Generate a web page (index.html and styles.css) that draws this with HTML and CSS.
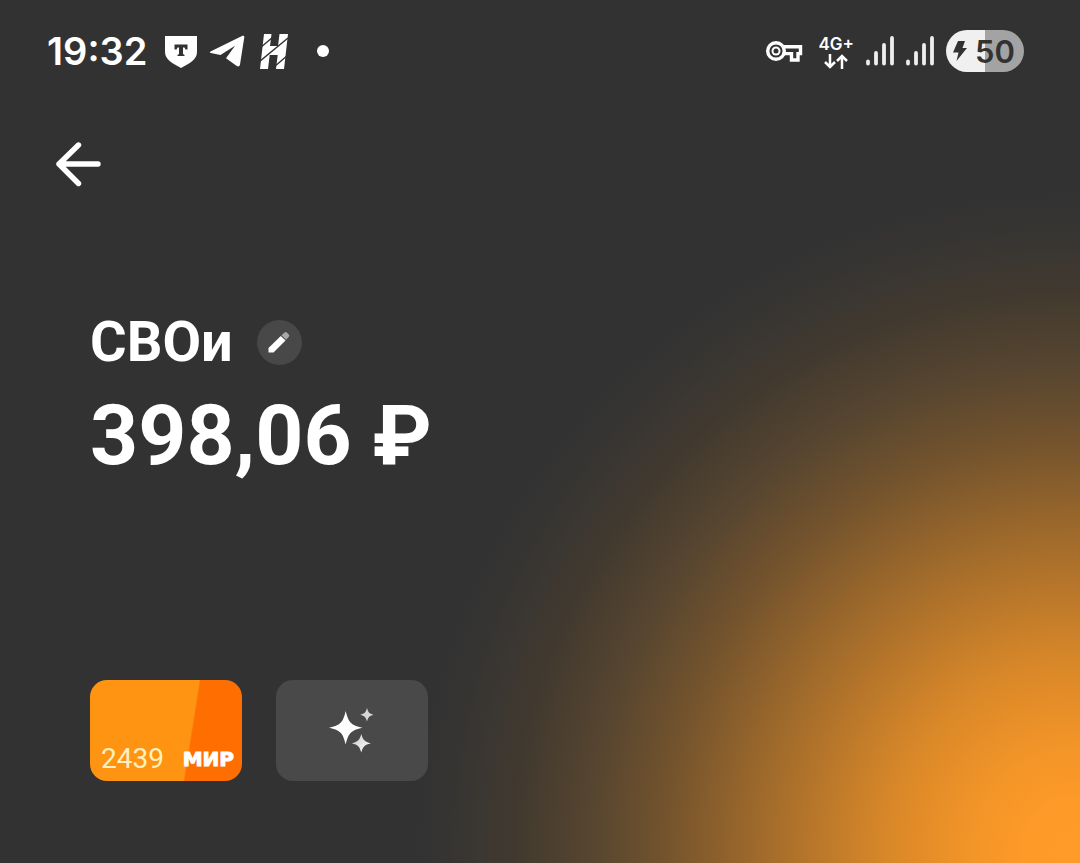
FILE: index.html
```html
<!DOCTYPE html>
<html lang="ru">
<head>
<meta charset="utf-8">
<meta name="viewport" content="width=device-width, initial-scale=1">
<title>СВОи</title>
<link rel="stylesheet" href="styles.css">
</head>
<body>
<header class="status">
  <div class="status-left">
    <time class="clock">19:32</time>
    <svg class="ico-bank" width="32" height="34" viewBox="0 0 32 34" aria-hidden="true">
      <path fill="#fff" d="M0 2h32v15c0 7-3 10-16 17C3 27 0 24 0 17z"/>
      <path fill="#323232" d="M9.500 10.500h13v5h-2l-1-2h-1.500v6.500l1.500 1v1h-7v-1l1.500-1v-6.500h-1.500l-1 2h-2z"/>
    </svg>
    <svg class="ico-plane" width="36" height="34" viewBox="0 0 36 34" aria-hidden="true">
      <path fill="#fff" d="M1.500 17.500 33.500 1.800c1-.4 2 .3 1.800 1.500L31 30.500c-.3 2-1.800 2.500-3.200 1.500L17 24.200l9-12.500L11.500 21 1.800 19c-1.200-.4-1.200-1-.3-1.500z"/>
    </svg>
    <svg class="ico-h" width="30" height="36" viewBox="0 0 30 36" aria-hidden="true">
      <path fill="#fff" d="M5 1h7.500l-1.500 12h8l1.500-12H29l-4 35h-8l1.700-14h-8L9 36H1z"/>
      <path fill="none" stroke="#323232" stroke-width="1.400" d="M1 15 14 4M0 29l29-24M15 34l14-12"/>
    </svg>
    <svg class="ico-dot" width="12" height="12" viewBox="0 0 12 12" aria-hidden="true"><circle cx="6" cy="6" r="6" fill="#fff"/></svg>
  </div>
  <div class="status-right">
    <svg class="ico-key" width="38" height="22" viewBox="0 0 38 22" aria-hidden="true">
      <circle cx="11" cy="11" r="8.300" fill="none" stroke="#fff" stroke-width="3.400"/>
      <path fill="none" stroke="#fff" stroke-width="3.400" d="M17.500 6.800H35.500v6.800H33v6.400h-6.500v-6.400h-9"/>
      <circle cx="11" cy="11" r="4.500" fill="#fff"/><circle cx="11" cy="11" r="2.500" fill="#323232"/>
    </svg>
    <div class="network">
      <span>4G+</span>
      <svg width="24" height="15" viewBox="0 0 24 15" fill="none" stroke="#fff" stroke-width="2.500" aria-hidden="true">
        <path d="M6 0v12.500M1 8l5 5 5-5M18 15V2.500M13 7l5-5 5 5"/>
      </svg>
    </div>
    <svg width="28" height="30" viewBox="0 0 28 30" stroke="#eee" stroke-width="3.800" stroke-linecap="round" aria-hidden="true">
      <path d="M2 25.500v2M10 17v10.500M18 9v18.500M26 2v25.500"/>
    </svg>
    <svg width="28" height="30" viewBox="0 0 28 30" stroke="#eee" stroke-width="3.800" stroke-linecap="round" aria-hidden="true">
      <path d="M2 25.500v2M10 17v10.500M18 9v18.500M26 2v25.500"/>
    </svg>
    <div class="battery">
      <svg width="14" height="22" viewBox="0 0 14 22" aria-hidden="true"><path fill="#323232" d="M5 1h7L9.500 8H14L3.500 21 5.500 12.500H0z"/></svg>
      <span>50</span>
    </div>
  </div>
</header>
<main class="account">
  <button class="back" type="button" aria-label="Назад">
    <svg width="46" height="46" viewBox="0 0 46 46" fill="none" stroke="#fff" stroke-width="5.400" stroke-linecap="round" stroke-linejoin="round" aria-hidden="true">
      <path d="M23.500 4 4 23l19.500 19.500M4 23h39"/>
    </svg>
  </button>
  <section class="summary">
    <div class="title-row">
      <h1 class="title">СВОи</h1>
      <button class="edit" type="button" aria-label="Изменить название">
        <svg width="24" height="24" viewBox="0 0 24 24" aria-hidden="true">
          <path fill="#fff" d="M1.500 18 13.800 6l4.700 4.500L6.500 22.500h-5z"/>
          <path fill="#a8a8a8" d="m14.500 5.300 2.800-2.600c.9-.8 1.900-.8 2.700 0l1.600 1.600c.9.900.9 1.900 0 2.800l-2.500 2.600z"/>
        </svg>
      </button>
    </div>
    <p class="amount">398,06 ₽</p>
  </section>
  <div class="tiles">
    <button class="tile card" type="button" aria-label="Карта МИР 2439">
      <span class="card-number">2439</span>
      <span class="card-brand">МИР</span>
    </button>
    <button class="tile magic" type="button" aria-label="Оформление">
      <svg width="46" height="46" viewBox="0 0 46 46" aria-hidden="true">
        <defs><linearGradient id="shine" x1="0" y1="0" x2="1" y2="1"><stop offset="0" stop-color="#c8c8c8"/><stop offset="1" stop-color="#fff"/></linearGradient></defs>
        <path fill="#fff" d="M16.700 3C19.500 14.500 22 17.300 33.500 19.700 22 22.200 19.500 25 16.700 36.500 14 25 11.500 22.200 0 19.700 11.500 17.300 14 14.500 16.700 3z"/>
        <path fill="#d8d8d8" d="M38 0c1.300 4.600 2.300 5.500 6.500 6.800-4.200 1.300-5.200 2.300-6.500 6.700-1.300-4.400-2.300-5.400-6.700-6.700C35.700 5.500 36.700 4.600 38 0z"/>
        <path fill="url(#shine)" d="M32.300 26c1.700 6.200 3.300 7.700 9.500 9.300-6.200 1.700-7.800 3.200-9.500 9.200-1.700-6-3.300-7.500-9.500-9.200 6.200-1.600 7.800-3.100 9.500-9.300z"/>
      </svg>
    </button>
  </div>
</main>
</body>
</html>
```
FILE: styles.css
```css
* {
  box-sizing: border-box;
}

body {
  margin: 0;
  min-height: 100vh;
  color: #fff;
  font-family: Roboto, "Liberation Sans", sans-serif;
  background: #323232 radial-gradient(circle 660px at calc(100% - 6px) 850px,
    #ff9b28 0,
    #fd9a28 50px,
    #f19428 110px,
    #d68629 195px,
    #a56d2b 303px,
    #73532d 410px,
    #564530 485px,
    #41392f 560px,
    #393632 605px,
    #323232 660px) no-repeat;
}

button {
  border: 0;
  padding: 0;
  color: inherit;
  font: inherit;
  background: none;
  cursor: pointer;
}

svg {
  display: block;
  flex: none;
}

.status {
  display: flex;
  justify-content: space-between;
  align-items: center;
  height: 102px;
  padding: 0 56px 0 47px;
  font-family: Inter, "Liberation Sans", sans-serif;
}

.status-left,
.status-right {
  display: flex;
  align-items: center;
}

.clock {
  font-size: 38px;
  font-weight: 600;
  line-height: 48px;
}

.ico-bank {
  margin-left: 18px;
}

.ico-plane {
  margin-left: 12px;
}

.ico-h {
  margin-left: 14px;
}

.ico-dot {
  margin-left: 28px;
}

.status-right {
  gap: 12px;
}

.ico-key {
  margin-right: 4px;
}

.network {
  display: flex;
  flex-direction: column;
  align-items: center;
  gap: 2px;
  padding-top: 2px;
  font-size: 17px;
  font-weight: 600;
  line-height: 16px;
}

.battery {
  display: flex;
  align-items: center;
  gap: 8px;
  height: 42px;
  padding: 0 9px 0 7px;
  border-radius: 21px;
  color: #323232;
  font-size: 31px;
  font-weight: 600;
  background: linear-gradient(90deg, #f0f0f0 50%, #a3a3a3 50%);
}

.account {
  display: flex;
  flex-direction: column;
  align-items: flex-start;
  padding: 39px 90px 82px;
}

.back {
  margin-left: -35px;
}

.summary {
  margin-top: 123px;
}

.title-row {
  display: flex;
  align-items: center;
  gap: 24px;
}

.title {
  margin: 0;
  font-size: 56px;
  font-weight: 700;
  line-height: 64px;
}

.edit {
  display: grid;
  place-items: center;
  width: 45px;
  height: 45px;
  border-radius: 50%;
  background: #484848;
}

.amount {
  margin: 12px 0 0;
  font-size: 84px;
  font-weight: 700;
  line-height: 100px;
}

.tiles {
  display: flex;
  gap: 34px;
  margin-top: 194px;
}

.tile {
  width: 152px;
  height: 101px;
  border-radius: 17px;
}

.card {
  display: flex;
  justify-content: space-between;
  align-items: flex-end;
  padding: 0 8px 6px 11px;
  background: linear-gradient(99deg, #ff9412 65%, #ff6e00 66%);
}

.card-number {
  color: #fff0c0;
  font-size: 28px;
  line-height: 32px;
}

.card-brand {
  font-family: "DejaVu Sans", sans-serif;
  font-size: 20px;
  font-weight: 700;
  line-height: 32px;
  -webkit-text-stroke: 1px #fff;
}

.magic {
  display: grid;
  place-items: center;
  background: #494949;
}
```
